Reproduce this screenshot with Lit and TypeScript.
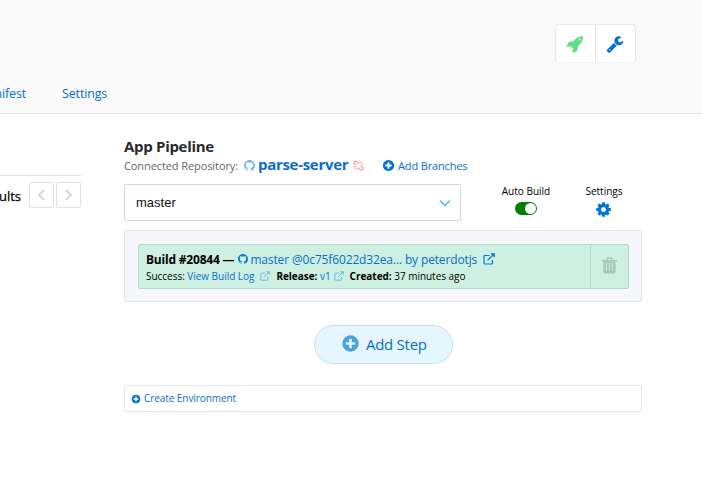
import { LitElement, html, css, svg } from "lit";
import { customElement } from "lit/decorators.js";

const PLUS =
  "M1344 960v-128q0-26-19-45t-45-19h-256v-256q0-26-19-45t-45-19h-128q-26 0-45 19t-19 45v256h-256q-26 0-45 19t-19 45v128q0 26 19 45t45 19h256v256q0 26 19 45t45 19h128q26 0 45-19t19-45v-256h256q26 0 45-19t19-45zm320-64q0 209-103 385.5t-279.5 279.5-385.5 103-385.5-103-279.5-279.5-103-385.5 103-385.5 279.5-279.5 385.5-103 385.5 103 279.5 279.5 103 385.5z";
const WRENCH =
  "M448 1472q0-26-19-45t-45-19-45 19-19 45 19 45 45 19 45-19 19-45zm644-420l-682 682q-37 37-90 37-52 0-91-37l-106-108q-38-36-38-90 0-53 38-91l681-681q39 98 114.5 173.5t173.5 114.5zm634-435q0 39-23 106-47 134-164.5 217.5t-258.5 83.5q-185 0-316.5-131.5t-131.5-316.5 131.5-316.5 316.5-131.5q58 0 121.5 16.5t107.5 46.5q16 11 16 28t-16 28l-293 169v224l193 107q5-3 79-48.5t135.5-81 70.5-35.5q15 0 23.5 10t8.5 25z";
const ROCKET =
  "M1472 448q0-40-28-68t-68-28-68 28-28 68 28 68 68 28 68-28 28-68zm224-288q0 249-75.5 430.5t-253.5 360.5q-81 80-195 176l-20 379q-2 16-16 26l-384 224q-7 4-16 4-12 0-23-9l-64-64q-13-14-8-32l85-276-281-281-276 85q-3 1-9 1-14 0-23-9l-64-64q-17-19-5-39l224-384q10-14 26-16l379-20q96-114 176-195 188-187 358-258t431-71q14 0 24 9.5t10 22.5z";
const COG =
  "M1152 896q0-106-75-181t-181-75-181 75-75 181 75 181 181 75 181-75 75-181zm512-109v222q0 12-8 23t-20 13l-185 28q-19 54-39 91 35 50 107 138 10 12 10 25t-9 23q-27 37-99 108t-94 71q-12 0-26-9l-138-108q-44 23-91 38-16 136-29 186-7 28-36 28h-222q-14 0-24.5-8.5t-11.5-21.5l-28-184q-49-16-90-37l-141 107q-10 9-25 9-14 0-25-11-126-114-165-168-7-10-7-23 0-12 8-23 15-21 51-66.5t54-70.5q-27-50-41-99l-183-27q-13-2-21-12.5t-8-23.5v-222q0-12 8-23t19-13l186-28q14-46 39-92-40-57-107-138-10-12-10-24 0-10 9-23 26-36 98.5-107.5t94.5-71.5q13 0 26 10l138 107q44-23 91-38 16-136 29-186 7-28 36-28h222q14 0 24.5 8.5t11.5 21.5l28 184q49 16 90 37l142-107q9-9 24-9 13 0 25 10 129 119 165 170 7 8 7 22 0 12-8 23-15 21-51 66.5t-54 70.5q26 50 41 98l183 28q13 2 21 12.5t8 23.5z";
const GITHUB =
  "M8 0C3.58 0 0 3.58 0 8c0 3.54 2.29 6.53 5.47 7.59.4.07.55-.17.55-.38 0-.19-.01-.82-.01-1.49-2.01.37-2.53-.49-2.69-.94-.09-.23-.48-.94-.82-1.13-.28-.15-.68-.52-.01-.53.63-.01 1.08.58 1.23.82.72 1.21 1.87.87 2.33.66.07-.52.28-.87.51-1.07-1.78-.2-3.64-.89-3.64-3.95 0-.87.31-1.59.82-2.15-.08-.2-.36-1.02.08-2.12 0 0 .67-.21 2.2.82.64-.18 1.32-.27 2-.27s1.36.09 2 .27c1.53-1.04 2.2-.82 2.2-.82.44 1.1.16 1.92.08 2.12.51.56.82 1.27.82 2.15 0 3.07-1.87 3.75-3.65 3.95.29.25.54.73.54 1.48 0 1.07-.01 1.93-.01 2.2 0 .21.15.46.55.38A8.01 8.01 0 0 0 16 8c0-4.42-3.58-8-8-8z";

const solid = (d: string, size: number, cls = "", box = 1792) =>
  html`<svg class="icon ${cls}" width=${size} height=${size} viewBox="0 0 ${box} ${box}"><path fill="currentColor" d=${d}></path></svg>`;

const line = (body: unknown, w: number, h: number, box: string, cls = "") =>
  html`<svg class="icon line ${cls}" width=${w} height=${h} viewBox=${box}>${body}</svg>`;

const external = (size: number, cls = "") =>
  line(svg`<path d="M6.500 2.500H1.700q-.7 0-.7.700v7.100q0 .7.700.7h7q.7 0 .7-.7V7"></path><path d="M4.600 7.400L10.500 1.500"></path><path fill="currentColor" stroke="none" d="M7.300 .2h4.500v4.500z"></path>`, size, size, "0 0 12 12", cls);

@customElement("app-root")
export class AppRoot extends LitElement {
  static styles = css`
    :host {
      display: block;
      height: 500px;
      overflow: hidden;
      background: #fff;
      color: #000;
      font-family: "Open Sans", sans-serif;
      font-size: 10px;
    }
    * { box-sizing: border-box; }
    .icon { display: block; flex: none; }
    .line { fill: none; stroke: currentColor; stroke-width: 1.2; }
    a { color: #0a6ec8; white-space: nowrap; }
    header {
      height: 114px;
      background: #f9f9f9;
      border-bottom: 1px solid #e3e3e3;
      display: flex;
      flex-direction: column;
      justify-content: space-between;
      padding: 24px 66px 9px 0;
    }
    .tools {
      align-self: flex-end;
      display: flex;
      width: 81px;
      height: 39px;
      background: #fff;
      border: 1px solid #e8e8e8;
      border-bottom-color: #f4f4f4;
      border-radius: 4px;
    }
    .tool { flex: 1; display: flex; align-items: center; justify-content: center; color: #0072ce; padding-right: 2px; }
    .tool + .tool { border-left: 1px solid #e3e3e3; }
    .tool.green { color: #5ce080; }
    .tabs { display: flex; font-size: 12.5px; line-height: 20px; letter-spacing: -0.15px; }
    .tab-cut { width: 26px; display: flex; justify-content: flex-end; overflow: hidden; margin-right: 36px; }
    .body { display: flex; align-items: flex-start; }
    aside { width: 81px; margin: 61px 43px 0 0; border-top: 1px solid #e0e0e0; padding-top: 6px; display: flex; gap: 2px; }
    .results { width: 21px; overflow: hidden; display: flex; justify-content: flex-end; font-size: 13px; line-height: 28px; margin-right: 6px; -webkit-text-stroke: 0.25px #000; }
    .page { width: 25px; height: 26px; border: 1px solid #e2e2e2; border-radius: 2px; display: flex; align-items: center; justify-content: center; color: #d6d6d6; }
    main { width: 518px; padding-top: 21px; }
    h1 { margin: 0; font-size: 15px; line-height: 22px; font-weight: 700; color: #292929; letter-spacing: -0.3px; }
    .repo { display: flex; align-items: center; height: 17px; font-size: 11px; color: #666; white-space: nowrap; letter-spacing: -0.09px; }
    .label { width: 120px; }
    .pale { color: #7db9e8; }
    .name { font-size: 15px; font-weight: 700; letter-spacing: -0.3px; width: 95px; margin-left: 3px; line-height: 15px; padding-bottom: 2px; }
    .unlink { color: #f98b8b; stroke-width: 1.15; }
    .branches { display: flex; align-items: center; gap: 3px; margin-left: 18px; color: #0072ce; letter-spacing: -0.15px; }
    .controls { display: flex; height: 37px; margin-top: 10px; }
    .select { width: 337px; border: 1px solid #d6d6d6; border-radius: 2px; display: flex; align-items: center; justify-content: space-between; padding: 0 9px 0 11px; font: 13px "Liberation Sans", sans-serif; color: #111; }
    .cyan { color: #4fc4ef; }
    .control { display: flex; flex-direction: column; align-items: center; font-size: 10px; line-height: 14px; width: 60px; }
    .auto { margin-left: 35px; }
    .settings { margin-left: 18px; }
    .toggle { width: 22px; height: 13px; border-radius: 7px; background: #008000; display: flex; justify-content: flex-end; padding: 1px; margin-top: 4px; }
    .knob { width: 11px; height: 11px; border-radius: 50%; background: #fff; }
    .cog { color: #0078d2; margin: 3px 1px 0 0; }
    .stage { height: 72px; margin-top: 9px; padding: 13px 12px 12px 13px; background: #f5f7fa; border: 1px solid #e2e4e6; border-radius: 2px; }
    .build { height: 45px; display: flex; border: 1px solid #b1d9c8; border-radius: 2px; background: #cdf0e2; }
    .info { flex: 1; padding: 5px 0 0 7px; }
    .row { display: flex; align-items: center; white-space: nowrap; }
    .title { font-size: 12px; height: 18px; letter-spacing: -0.14px; }
    .detail { font-size: 10px; height: 15px; letter-spacing: -0.03px; }
    .title .gh { margin: 0 2px 0 4px; color: #0a7dd0; }
    .bold { font-weight: 700; }
    .title .bold { letter-spacing: -0.2px; }
    .title .ext { margin-left: 6px; color: #0078d2; }
    .sky { color: #6bb9df; margin: 0 6px; }
    .sky.near { margin: 0 6px 0 3px; }
    .trash { width: 38px; border-left: 1px solid #b1d9c8; display: flex; align-items: center; justify-content: center; padding: 0 1px 2px 0; color: #a5c6b9; }
    .step { width: 139px; height: 39px; margin: 23px 0 0 190px; border: 1px solid #c9dde6; border-radius: 20px; background: #e5f6fe; display: flex; align-items: center; padding: 0 0 2px 26px; gap: 6px; font-size: 15px; letter-spacing: -0.28px; }
    .step .icon { color: #4aa3df; }
    .env { height: 27px; margin-top: 21px; border: 1px solid #e6e6e6; border-radius: 2px; display: flex; align-items: center; gap: 3px; padding-left: 6px; font-size: 10px; color: #0072ce; letter-spacing: -0.07px; }
    .env a { padding-bottom: 2px; }
  `;

  render() {
    return html`
      <header>
        <div class="tools">
          <span class="tool green">${solid(ROCKET, 18)}</span>
          <span class="tool">${solid(WRENCH, 18)}</span>
        </div>
        <nav class="tabs"><span class="tab-cut"><a>Manifest</a></span><a>Settings</a></nav>
      </header>
      <div class="body">
        <aside>
          <span class="results"><span>Results</span></span>
          <span class="page">${line(svg`<path stroke-width="1.8" d="M7 1L2 6l5 5"></path>`, 9, 12, "0 0 9 12")}</span>
          <span class="page">${line(svg`<path stroke-width="1.8" d="M2 1l5 5-5 5"></path>`, 9, 12, "0 0 9 12")}</span>
        </aside>
        <main>
          <h1>App Pipeline</h1>
          <div class="repo">
            <span class="label">Connected Repository:</span>
            ${solid(GITHUB, 11, "pale", 16)}
            <a class="name">parse-server</a>
            ${line(svg`<path d="M3.800 5.800L1.600 3.900a1.600 1.600 0 0 1 2.300-2.300L6.300 3.800M5.700 8.200l2.400 2.200a1.600 1.600 0 0 0 2.300-2.300L8.200 6.200"></path><path stroke-width=".8" d="M7.500 3.200V.5M8.300 3.700l2.200-2.200M8.800 4.500h2.700M4.500 8.800v2.700M3.700 8.300l-2.200 2.200M3.200 7.500H.5"></path>`, 11, 11, "0 0 12 12", "unlink")}
            <span class="branches">${solid(PLUS, 13)}<a>Add Branches</a></span>
          </div>
          <div class="controls">
            <div class="select"><span>master</span>${line(svg`<path stroke-width="1.6" d="M1 1.500l5 5 5-5"></path>`, 12, 8, "0 0 12 8", "cyan")}</div>
            <div class="control auto"><span>Auto Build</span><span class="toggle"><span class="knob"></span></span></div>
            <div class="control settings"><span>Settings</span>${solid(COG, 17, "cog")}</div>
          </div>
          <section class="stage">
            <div class="build">
              <div class="info">
                <div class="row title"><span class="bold">Build #20844 —</span>${solid(GITHUB, 10, "gh", 16)}<a>master @0c75f6022d32ea... by peterdotjs</a>${external(12, "ext")}</div>
                <div class="row detail"><span>Success:&nbsp;</span><a>View Build Log</a>${external(10, "sky")}<span class="bold">Release:&nbsp;</span><a>v1</a>${external(10, "sky near")}<span class="bold">Created:&nbsp;</span><span>37 minutes ago</span></div>
              </div>
              <div class="trash">
                <svg class="icon" width="15" height="17" viewBox="0 0 15 17" fill="none" stroke="currentColor">
                  <path stroke-width="1.3" d="M5 3V2q0-1 1-1h3q1 0 1 1v1"></path>
                  <path stroke-width="1.500" d="M0 3.700h15"></path>
                  <path fill="currentColor" stroke="none" fill-rule="evenodd" d="M1.500 4.400h12v10.600q0 1.500-1.500 1.500h-9q-1.500 0-1.500-1.500zM4 6v8h1V6zM7 6v8h1V6zM10 6v8h1V6z"></path>
                </svg>
              </div>
            </div>
          </section>
          <div class="step">${solid(PLUS, 19)}<a>Add Step</a></div>
          <div class="env">${solid(PLUS, 10)}<a>Create Environment</a></div>
        </main>
      </div>
    `;
  }
}
